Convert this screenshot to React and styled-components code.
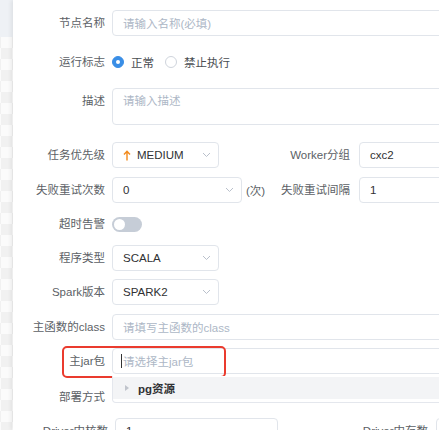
import React from "react";
import styled, {createGlobalStyle} from "styled-components";

const Global = createGlobalStyle`
    html, body {
        margin: 0;
        padding: 0;
        background: #fff;
        overflow: hidden;
    }
    body {
        font-family: "Liberation Sans", "Noto Sans CJK SC", sans-serif;
        font-size: 11.5px;
        color: #606266;
    }
`

const Page = styled.div`
    display: flex;
    width: 520px;
    height: 430px;
    overflow: hidden;
`

const Strip = styled.div`
    width: 13px;
    flex-shrink: 0;
    display: flex;
    flex-direction: column;
`

const StripTop = styled.div`
    height: 37px;
    background: #eef1f5;
`

const StripChecker = styled.div`
    flex: 1;
    background: repeating-conic-gradient(#f1f1f1 0 25%, #fbfbfb 0 50%) 1px 0 / 22px 22px;
`

const Panel = styled.div`
    position: relative;
    width: 490px;
    flex-shrink: 0;
    padding-top: 10px;
    background: #fff;
    box-shadow: -2px 0 4px rgba(0, 0, 0, 0.07);
`

const Row = styled.div`
    position: relative;
    display: flex;
    align-items: ${props => props.$top ? "flex-start" : "center"};
    min-height: 26px;
    margin-bottom: ${props => props.$mb || 8}px;
    white-space: nowrap;
`

const Col = styled.div`
    display: flex;
    align-items: center;
    flex-shrink: 0;
    width: ${props => props.$w ? props.$w + "px" : "auto"};
    flex: ${props => props.$w ? "none" : 1};
`

const Label = styled.div`
    width: ${props => props.$w || 92}px;
    flex-shrink: 0;
    margin-right: ${props => props.$gap || 7}px;
    text-align: right;
    color: #5c5f66;
    line-height: 26px;
`

const Input = styled.div`
    box-sizing: border-box;
    display: flex;
    align-items: center;
    height: 26px;
    padding: 0 10px;
    border: 1px solid #e1e5eb;
    border-radius: 4px;
    flex: ${props => props.$w ? "none" : 1};
    width: ${props => props.$w ? props.$w + "px" : "auto"};
    color: #303133;
`

const Placeholder = styled.span`
    color: #adb7c6;
`

const TextArea = styled(Input)`
    height: 37px;
    align-items: flex-start;
    padding-top: 4px;
    line-height: 17px;
`

const Select = styled(Input)`
    justify-content: space-between;
    padding-right: 7px;
`

const Value = styled.span`
    display: flex;
    align-items: center;
    gap: 6px;
    color: #303133;
`

const Unit = styled.span`
    margin-left: 4px;
    color: #5c5f66;
`

const Radios = styled.div`
    display: flex;
    align-items: center;
`

const RadioItem = styled.span`
    display: flex;
    align-items: center;
    margin-right: 11px;
    color: #4a4d52;
`

const RadioDot = styled.span`
    box-sizing: border-box;
    width: 12px;
    height: 12px;
    border-radius: 50%;
    margin-right: 7px;
    border: 1px solid ${props => props.$on ? "#3a8ee6" : "#cfd4dc"};
    background: ${props => props.$on ? "#3a8ee6" : "#fff"};
    display: flex;
    align-items: center;
    justify-content: center;
    &::after {
        content: "";
        width: 4px;
        height: 4px;
        border-radius: 50%;
        background: #fff;
    }
`

const Switch = styled.span`
    position: relative;
    width: 30px;
    height: 15px;
    border-radius: 8px;
    background: #c6cdd7;
    &::after {
        content: "";
        position: absolute;
        left: 2px;
        top: 2px;
        width: 11px;
        height: 11px;
        border-radius: 50%;
        background: #fff;
    }
`

const Caret = styled.span`
    width: 1px;
    height: 14px;
    background: #333;
    margin-right: 1px;
    margin-left: -2px;
`

const Dropdown = styled.div`
    position: absolute;
    left: 0;
    right: 0;
    top: 28px;
    box-sizing: border-box;
    padding: 1px 0 3px;
    border: 1px solid #e4e7ed;
    border-top: none;
    border-radius: 0 0 4px 4px;
    background: #fff;
    z-index: 2;
`

const Option = styled.div`
    display: flex;
    align-items: center;
    height: 22px;
    padding-left: 12px;
    background: #f3f4f6;
    font-weight: bold;
    color: #303133;
`

const Tri = styled.span`
    width: 0;
    height: 0;
    border-left: 4px solid #c0c4cc;
    border-top: 3.5px solid transparent;
    border-bottom: 3.5px solid transparent;
    margin-right: 9px;
`

const Field = styled.div`
    position: relative;
    flex: 1;
    display: flex;
`

const Mark = styled.div`
    position: absolute;
    left: 49px;
    top: -2px;
    width: 164px;
    height: 32px;
    box-sizing: border-box;
    border: 2px solid #ea3b2e;
    border-radius: 5px;
    pointer-events: none;
`

const Chevron = () => (
    <svg width="9" height="6" viewBox="0 0 9 6">
        <path d="M1 1l3.5 3.5L8 1" fill="none" stroke="#b9c0cb" strokeWidth="1"/>
    </svg>
)

const UpArrow = () => (
    <svg width="8" height="11" viewBox="0 0 8 11">
        <path d="M4 10.5V1.5M1 4.5L4 1.3 7 4.5" fill="none" stroke="#f28a1c" strokeWidth="1.4"/>
    </svg>
)

const App = () => {
    return (
        <Page>
            <Global/>
            <Strip>
                <StripTop/>
                <StripChecker/>
            </Strip>
            <Panel>
                <Row $mb={13}>
                    <Label>节点名称</Label>
                    <Input><Placeholder>请输入名称(必填)</Placeholder></Input>
                </Row>
                <Row $mb={13}>
                    <Label>运行标志</Label>
                    <Radios>
                        <RadioItem><RadioDot $on/>正常</RadioItem>
                        <RadioItem><RadioDot/>禁止执行</RadioItem>
                    </Radios>
                </Row>
                <Row $mb={17} $top>
                    <Label>描述</Label>
                    <TextArea><Placeholder>请输入描述</Placeholder></TextArea>
                </Row>
                <Row $mb={9}>
                    <Col $w={245}>
                        <Label>任务优先级</Label>
                        <Select $w={107}>
                            <Value><UpArrow/>MEDIUM</Value>
                            <Chevron/>
                        </Select>
                    </Col>
                    <Col>
                        <Label $gap={9}>Worker分组</Label>
                        <Input>cxc2</Input>
                    </Col>
                </Row>
                <Row>
                    <Col $w={245}>
                        <Label>失败重试次数</Label>
                        <Select $w={130}>
                            <Value>0</Value>
                            <Chevron/>
                        </Select>
                        <Unit>(次)</Unit>
                    </Col>
                    <Col>
                        <Label $gap={9}>失败重试间隔</Label>
                        <Input>1</Input>
                    </Col>
                </Row>
                <Row>
                    <Label>超时告警</Label>
                    <Switch/>
                </Row>
                <Row>
                    <Label>程序类型</Label>
                    <Select $w={107}>
                        <Value>SCALA</Value>
                        <Chevron/>
                    </Select>
                </Row>
                <Row $mb={9}>
                    <Label>Spark版本</Label>
                    <Select $w={107}>
                        <Value>SPARK2</Value>
                        <Chevron/>
                    </Select>
                </Row>
                <Row>
                    <Label>主函数的class</Label>
                    <Input><Placeholder>请填写主函数的class</Placeholder></Input>
                </Row>
                <Row $mb={10}>
                    <Label>主jar包</Label>
                    <Field>
                        <Input><Caret/><Placeholder>请选择主jar包</Placeholder></Input>
                        <Dropdown>
                            <Option><Tri/>pg资源</Option>
                        </Dropdown>
                    </Field>
                    <Mark/>
                </Row>
                <Row>
                    <Label>部署方式</Label>
                </Row>
                <Row>
                    <Col $w={265}>
                        <Label $w={95}>Driver内核数</Label>
                        <Input $w={163}>1</Input>
                    </Col>
                    <Col>
                        <Label $w={150} $gap={8}>Driver内存数</Label>
                        <Input>1</Input>
                    </Col>
                </Row>
            </Panel>
        </Page>
    )
}

export default App;
